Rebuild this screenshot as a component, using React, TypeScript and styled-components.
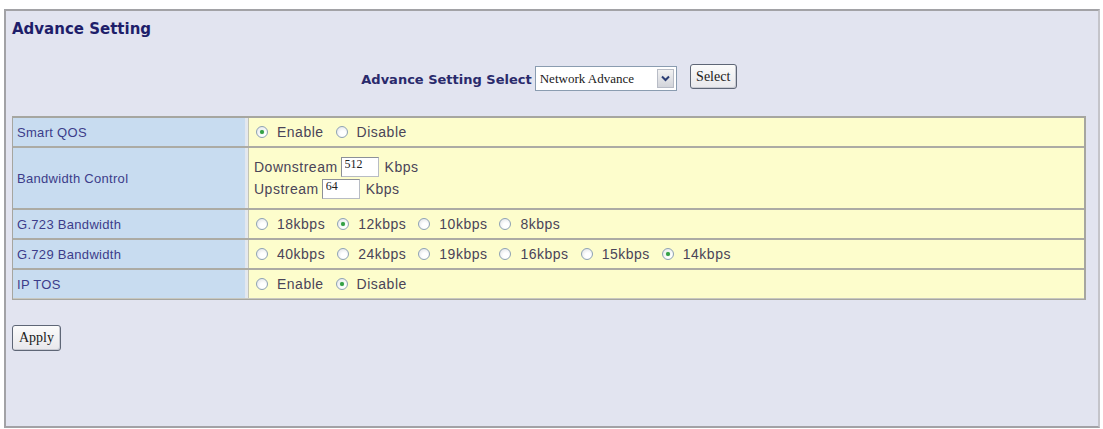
import React from "react";
import styled, { createGlobalStyle } from "styled-components";

const GlobalStyle = createGlobalStyle`
  body {
    margin: 0;
    background: #ffffff;
    font-family: "Liberation Sans", Arial, sans-serif;
  }
`;

const Page = styled.div`
  padding: 9px 3px 0 4px;
`;

const Frame = styled.div`
  box-sizing: border-box;
  width: 1096px;
  height: 419px;
  border: 2px solid #a2a2a6;
  border-right-color: #c4c4ca;
  background: #e2e4f0;
  padding: 0 12px 0 6px;
`;

const Title = styled.h1`
  margin: 9px 0 0;
  font-family: "DejaVu Sans", Verdana, sans-serif;
  font-size: 15px;
  line-height: 18px;
  font-weight: bold;
  color: #1e1e6a;
`;

const SelectRow = styled.div`
  display: flex;
  justify-content: center;
  align-items: center;
  margin-top: 25px;
  height: 27px;
`;

const SelectLabel = styled.span`
  font-family: "DejaVu Sans", Verdana, sans-serif;
  font-size: 13px;
  font-weight: bold;
  color: #2a2a6c;
  margin: 6px 3px 0 0;
`;

const SelectBox = styled.div`
  box-sizing: border-box;
  width: 142px;
  height: 25px;
  margin-top: 4px;
  display: flex;
  align-items: center;
  justify-content: space-between;
  background: #ffffff;
  border: 1px solid #8a9cb0;
  padding: 0 2px 0 4px;
  font-family: "Liberation Serif", "Times New Roman", serif;
  font-size: 13px;
  color: #202020;
`;

const ArrowBox = styled.span`
  box-sizing: border-box;
  width: 17px;
  height: 19px;
  display: flex;
  align-items: center;
  justify-content: center;
  background: linear-gradient(#f2f2f2, #d2d4da);
  border: 1px solid #b8bcc6;
`;

const OldButton = styled.button<{ $w: number }>`
  box-sizing: border-box;
  width: ${(p) => p.$w}px;
  height: 26px;
  padding: 0;
  background: linear-gradient(#fbfbfb, #e8e8ec);
  border: 1px solid #5e6676;
  border-radius: 3px;
  box-shadow: inset -1px -1px 0 #c8cad2;
  font-family: "Liberation Serif", "Times New Roman", serif;
  font-size: 14px;
  color: #202020;
`;

const SelectButton = styled(OldButton)`
  margin-left: 13px;
  height: 25px;
`;

const Table = styled.div`
  margin-top: 26px;
  border: 1px solid #a6a6a0;
  border-top-width: 2px;
  border-right-width: 2px;
`;

const Row = styled.div<{ $h: number }>`
  display: grid;
  grid-template-columns: 235px 1fr;
  height: ${(p) => p.$h}px;
  border-bottom: 2px solid #acaba4;
  &:last-child {
    border-bottom: 1px solid #c8c8c0;
  }
`;

const LabelCell = styled.div`
  display: flex;
  align-items: center;
  padding-left: 4px;
  background: #c8dcf0;
  border-right: 3px solid #e4e8ee;
  font-size: 13px;
  letter-spacing: 0.3px;
  color: #3c3c8a;
`;

const ValueCell = styled.div<{ $stack?: boolean }>`
  display: flex;
  flex-direction: ${(p) => (p.$stack ? "column" : "row")};
  justify-content: ${(p) => (p.$stack ? "center" : "flex-start")};
  align-items: ${(p) => (p.$stack ? "flex-start" : "center")};
  gap: ${(p) => (p.$stack ? "2px" : "0")};
  padding-left: ${(p) => (p.$stack ? "5px" : "7px")};
  background: #fdfdcc;
  border-left: 1px solid #c4c4b4;
  font-size: 14px;
  letter-spacing: 0.5px;
  color: #4a4458;
`;

const Option = styled.label`
  display: inline-flex;
  align-items: center;
  margin-right: 12px;
`;

const Radio = styled.span<{ $on?: boolean }>`
  position: relative;
  box-sizing: border-box;
  width: 12px;
  height: 12px;
  margin-right: 9px;
  border-radius: 50%;
  border: 1px solid #8ea2b4;
  background: radial-gradient(circle at 60% 65%, #ffffff 30%, #dcdee2 100%);
  &::after {
    content: "";
    display: ${(p) => (p.$on ? "block" : "none")};
    position: absolute;
    left: 3px;
    top: 3px;
    width: 4px;
    height: 4px;
    border-radius: 50%;
    background: #36a046;
    box-shadow: 0 0 1px #60c070;
  }
`;

const Line = styled.div`
  display: flex;
  align-items: center;
  height: 20px;
`;

const NumBox = styled.input`
  box-sizing: border-box;
  width: 38px;
  height: 20px;
  margin: 0 6px 0 3px;
  padding: 0 3px 6px;
  border: 1px solid #b8bcc4;
  border-top-color: #8c9098;
  border-left-color: #8c9098;
  background: #ffffff;
  font-family: "Liberation Serif", "Times New Roman", serif;
  font-size: 12px;
  color: #202020;
  outline: none;
`;

const ApplyArea = styled.div`
  margin-top: 25px;
`;

function Choice({ label, on }: { label: string; on?: boolean }) {
  return (
    <Option>
      <Radio $on={on} />
      {label}
    </Option>
  );
}

const g723 = ["18kbps", "12kbps", "10kbps", "8kbps"];
const g729 = ["40kbps", "24kbps", "19kbps", "16kbps", "15kbps", "14kbps"];

export default function App() {
  return (
    <>
      <GlobalStyle />
      <Page>
        <Frame>
          <Title>Advance Setting</Title>

          <SelectRow>
            <SelectLabel>Advance Setting Select</SelectLabel>
            <SelectBox>
              Network Advance
              <ArrowBox>
                <svg width="9" height="7" viewBox="0 0 9 7">
                  <path d="M1 1.5 L4.5 5 L8 1.5" fill="none" stroke="#2c3e74" strokeWidth="2" />
                </svg>
              </ArrowBox>
            </SelectBox>
            <SelectButton $w={47} type="button">Select</SelectButton>
          </SelectRow>

          <Table>
            <Row $h={28}>
              <LabelCell>Smart QOS</LabelCell>
              <ValueCell>
                <Choice label="Enable" on />
                <Choice label="Disable" />
              </ValueCell>
            </Row>
            <Row $h={60}>
              <LabelCell>Bandwidth Control</LabelCell>
              <ValueCell $stack>
                <Line>
                  Downstream
                  <NumBox defaultValue="512" readOnly />
                  Kbps
                </Line>
                <Line>
                  Upstream
                  <NumBox defaultValue="64" readOnly />
                  Kbps
                </Line>
              </ValueCell>
            </Row>
            <Row $h={28}>
              <LabelCell>G.723 Bandwidth</LabelCell>
              <ValueCell>
                {g723.map((v) => (
                  <Choice key={v} label={v} on={v === "12kbps"} />
                ))}
              </ValueCell>
            </Row>
            <Row $h={28}>
              <LabelCell>G.729 Bandwidth</LabelCell>
              <ValueCell>
                {g729.map((v) => (
                  <Choice key={v} label={v} on={v === "14kbps"} />
                ))}
              </ValueCell>
            </Row>
            <Row $h={28}>
              <LabelCell>IP TOS</LabelCell>
              <ValueCell>
                <Choice label="Enable" />
                <Choice label="Disable" on />
              </ValueCell>
            </Row>
          </Table>

          <ApplyArea>
            <OldButton $w={49} type="button">Apply</OldButton>
          </ApplyArea>
        </Frame>
      </Page>
    </>
  );
}
